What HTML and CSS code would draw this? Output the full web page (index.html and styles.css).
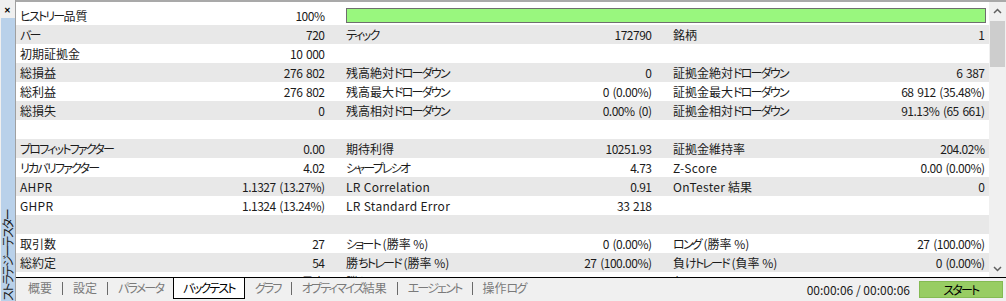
FILE: index.html
```html
<!DOCTYPE html>
<html lang="ja">

<head>
    <meta charset="UTF-8">
    <title>ストラテジーテスター</title>
    <link rel="stylesheet" href="styles.css">
</head>

<body>
    <div class="tester">
        <aside class="side">
            <div class="close">&#x2715;</div>
            <div class="side-title"><span class="k">ストラテジーテスター</span></div>
        </aside>

        <main class="panel">
            <div class="report-wrap">
                <div class="report">
                    <div class="row">
                        <div class="cell"><span><span class="k">ヒストリー</span>品質</span><span>100%</span></div>
                        <div class="cell wide">
                            <div class="quality-bar"></div>
                        </div>
                    </div>
                    <div class="row">
                        <div class="cell"><span class="k">バー</span><span>720</span></div>
                        <div class="cell"><span class="k">ティック</span><span>172790</span></div>
                        <div class="cell"><span>銘柄</span><span>1</span></div>
                    </div>
                    <div class="row">
                        <div class="cell"><span>初期証拠金</span><span>10 000</span></div>
                        <div class="cell"></div>
                        <div class="cell"></div>
                    </div>
                    <div class="row">
                        <div class="cell"><span>総損益</span><span>276 802</span></div>
                        <div class="cell"><span>残高絶対<span class="k">ドローダウン</span></span><span>0</span></div>
                        <div class="cell"><span>証拠金絶対<span class="k">ドローダウン</span></span><span>6 387</span></div>
                    </div>
                    <div class="row">
                        <div class="cell"><span>総利益</span><span>276 802</span></div>
                        <div class="cell"><span>残高最大<span class="k">ドローダウン</span></span><span>0 (0.00%)</span></div>
                        <div class="cell"><span>証拠金最大<span class="k">ドローダウン</span></span><span>68 912 (35.48%)</span></div>
                    </div>
                    <div class="row">
                        <div class="cell"><span>総損失</span><span>0</span></div>
                        <div class="cell"><span>残高相対<span class="k">ドローダウン</span></span><span>0.00% (0)</span></div>
                        <div class="cell"><span>証拠金相対<span class="k">ドローダウン</span></span><span>91.13% (65 661)</span></div>
                    </div>
                    <div class="row">
                        <div class="cell"></div>
                        <div class="cell"></div>
                        <div class="cell"></div>
                    </div>
                    <div class="row">
                        <div class="cell"><span class="k">プロフィットファクター</span><span>0.00</span></div>
                        <div class="cell"><span>期待利得</span><span>10251.93</span></div>
                        <div class="cell"><span>証拠金維持率</span><span>204.02%</span></div>
                    </div>
                    <div class="row">
                        <div class="cell"><span class="k">リカバリファクター</span><span>4.02</span></div>
                        <div class="cell"><span class="k">シャープレシオ</span><span>4.73</span></div>
                        <div class="cell"><span class="latin">Z-Score</span><span>0.00 (0.00%)</span></div>
                    </div>
                    <div class="row">
                        <div class="cell"><span class="latin">AHPR</span><span>1.1327 (13.27%)</span></div>
                        <div class="cell"><span class="latin">LR Correlation</span><span>0.91</span></div>
                        <div class="cell"><span><span class="latin">OnTester</span> 結果</span><span>0</span></div>
                    </div>
                    <div class="row">
                        <div class="cell"><span class="latin">GHPR</span><span>1.1324 (13.24%)</span></div>
                        <div class="cell"><span class="latin">LR Standard Error</span><span>33 218</span></div>
                        <div class="cell"></div>
                    </div>
                    <div class="row">
                        <div class="cell"></div>
                        <div class="cell"></div>
                        <div class="cell"></div>
                    </div>
                    <div class="row">
                        <div class="cell"><span>取引数</span><span>27</span></div>
                        <div class="cell"><span><span class="k">ショート</span> (勝率 %)</span><span>0 (0.00%)</span></div>
                        <div class="cell"><span><span class="k">ロング</span> (勝率 %)</span><span>27 (100.00%)</span></div>
                    </div>
                    <div class="row">
                        <div class="cell"><span>総約定</span><span>54</span></div>
                        <div class="cell"><span>勝<span class="k">ちトレード</span> (勝率 %)</span><span>27 (100.00%)</span></div>
                        <div class="cell"><span>負<span class="k">けトレード</span> (負率 %)</span><span>0 (0.00%)</span></div>
                    </div>
                    <div class="row">
                        <div class="cell"><span></span><span>最大</span></div>
                        <div class="cell"><span>勝<span class="k">ちトレード</span></span><span></span></div>
                        <div class="cell"><span>負<span class="k">けトレード</span></span><span></span></div>
                    </div>
                </div>

                <div class="scrollbar">
                    <div class="arrow">
                        <svg width="9" height="6" viewBox="0 0 9 6"><polyline points="1,5 4.5,1.5 8,5" fill="none" stroke="#606060" stroke-width="1.5"/></svg>
                    </div>
                    <div class="thumb"></div>
                    <div class="track"></div>
                    <div class="arrow">
                        <svg width="9" height="6" viewBox="0 0 9 6"><polyline points="1,1 4.5,4.5 8,1" fill="none" stroke="#606060" stroke-width="1.5"/></svg>
                    </div>
                </div>
            </div>

            <div class="tabbar">
                <div class="tab">概要</div>
                <span class="sep"></span>
                <div class="tab">設定</div>
                <span class="sep"></span>
                <div class="tab k">パラメータ</div>
                <div class="tab active k">バックテスト</div>
                <div class="tab k">グラフ</div>
                <span class="sep"></span>
                <div class="tab"><span class="k">オプティマイズ</span>結果</div>
                <span class="sep"></span>
                <div class="tab k">エージェント</div>
                <span class="sep"></span>
                <div class="tab">操作<span class="k">ログ</span></div>

                <div class="status">
                    <span class="elapsed">00:00:06 / 00:00:06</span>
                    <button class="start-button"><span class="k">スタート</span></button>
                </div>
            </div>
        </main>
    </div>
</body>

</html>
```

FILE: styles.css
```css
body {
    font-family: 'Noto Sans CJK JP', sans-serif;
    font-size: 12px;
    font-feature-settings: "palt";
    color: #1b1b1b;
    margin: 0;
    padding: 0;
    background-color: #f0f0f0;
    overflow: hidden;
}

/* kana runs are narrower in the original UI font */
.k {
    letter-spacing: -1.8px;
}

.latin {
    letter-spacing: 0.3px;
}

.tester {
    display: flex;
    height: 301px;
}

/* left strip */

.side {
    width: 15px;
    display: flex;
    flex-direction: column;
}

.close {
    height: 18px;
    font-size: 8px;
    font-weight: bold;
    line-height: 20px;
    text-align: center;
    color: #000;
}

.side-title {
    flex: 1;
    margin-left: 1px;
    background-color: #b9d1ea;
    writing-mode: vertical-rl;
    text-orientation: sideways;
    transform: rotate(180deg);
    line-height: 14px;
    font-size: 12px;
    color: #1b1b1b;
    white-space: nowrap;
    overflow: hidden;
}

/* main panel */

.panel {
    flex: 1;
    display: flex;
    flex-direction: column;
    border-left: 1px solid #a0a0a0;
    min-width: 0;
}

.report-wrap {
    height: 278px;
    box-sizing: border-box;
    display: flex;
    border-top: 2px solid #a9a9a9;
    border-bottom: 1px solid #000;
    overflow: hidden;
}

.report {
    flex: 1;
    background-color: white;
    padding-top: 4px;
    overflow: hidden;
}

.row {
    display: grid;
    grid-template-columns: 327px 327px 1fr;
    height: 19px;
    line-height: 19px;
}

.row:nth-child(even) {
    background-color: #e8e8e8;
}

.cell {
    display: flex;
    justify-content: space-between;
    padding: 0 19px 0 3px;
    white-space: nowrap;
}

.cell > span + span {
    letter-spacing: -0.5px;
    word-spacing: 1.5px;
    margin-right: -0.5px;
}

.cell:first-child {
    padding-left: 4px;
}

.cell:last-child {
    padding-right: 5px;
}

.cell.wide {
    grid-column: 2 / 4;
    padding: 2px 3px;
}

.quality-bar {
    flex: 1;
    height: 15px;
    box-sizing: border-box;
    background-color: #99f77e;
    border: 1px solid #6e6e6e;
}

/* scrollbar */

.scrollbar {
    width: 17px;
    background-color: #f0f0f0;
    display: flex;
    flex-direction: column;
    align-items: center;
}

.arrow {
    height: 17px;
    display: flex;
    align-items: center;
    justify-content: center;
}

.thumb {
    width: 15px;
    height: 46px;
    margin-top: 2px;
    background-color: #cdcdcd;
}

.track {
    flex: 1;
}

/* tabs */

.tabbar {
    flex: 1;
    display: flex;
    align-items: flex-start;
    padding-left: 2px;
}

.tab {
    height: 20px;
    line-height: 20px;
    padding: 0 10px;
    color: #7a7a7a;
    white-space: nowrap;
}

.tab.active {
    background-color: white;
    color: #000;
    border: 1px solid #000;
    border-top: none;
    padding: 0 9px;
}

.sep {
    width: 1px;
    height: 13px;
    margin-top: 4px;
    background-color: #6a6a6a;
}

.status {
    margin-left: auto;
    display: flex;
    align-items: center;
    height: 22px;
}

.elapsed {
    color: #1b1b1b;
    margin-right: 9px;
}

.start-button {
    width: 84px;
    height: 17px;
    margin-right: 3px;
    padding: 0;
    font-family: inherit;
    font-size: 12px;
    font-feature-settings: "palt";
    line-height: 15px;
    color: #000;
    background-color: #98cd63;
    border: 1px solid #84bb52;
}
```
